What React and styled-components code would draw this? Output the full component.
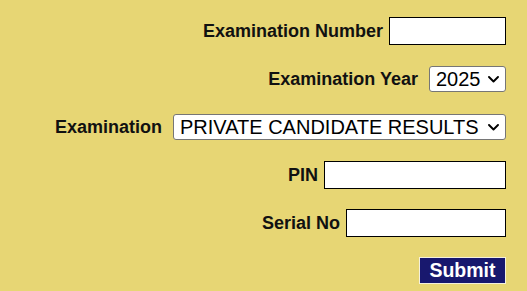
import React, { useState } from 'react';
import styled, { createGlobalStyle } from 'styled-components';

const GlobalStyle = createGlobalStyle`
  html, body {
    margin: 0;
    padding: 0;
    background: #e7d674;
  }
  body {
    font-family: "Liberation Sans", Arial, sans-serif;
    width: 527px;
    height: 291px;
    overflow: hidden;
  }
`;

const Form = styled.form`
  display: flex;
  flex-direction: column;
  align-items: flex-end;
  gap: 20px;
  padding: 17px 21px 0 0;
`;

const Row = styled.div`
  display: flex;
  align-items: center;
  justify-content: flex-end;
  height: 28px;
  gap: ${props => props.wide ? '11px' : '6px'};
`;

const Label = styled.label`
  font-size: 18px;
  font-weight: bold;
  color: #111;
`;

const TextInput = styled.input`
  box-sizing: border-box;
  width: ${props => props.w}px;
  height: 28px;
  border: 1px solid #000;
  background: #fff;
  padding: 2px 4px;
  font-size: 16px;
  font-family: "Liberation Sans", Arial, sans-serif;
  outline: none;
`;

const SelectWrap = styled.div`
  position: relative;
  width: ${props => props.w}px;
  height: 26px;
  margin-top: -1px;
`;

const Select = styled.select`
  appearance: none;
  -webkit-appearance: none;
  box-sizing: border-box;
  width: 100%;
  height: 100%;
  border: 1px solid #767676;
  border-radius: 3px;
  background: #fff;
  color: #000;
  font-size: 20px;
  font-family: "Liberation Sans", Arial, sans-serif;
  padding: 0 20px 0 6px;
  outline: none;
`;

const Chevron = styled.svg`
  position: absolute;
  right: 7px;
  top: 50%;
  margin-top: -3px;
  pointer-events: none;
`;

const SubmitButton = styled.button`
  box-sizing: border-box;
  width: 87px;
  height: 27px;
  margin-top: -1px;
  background: #18186e;
  color: #fff;
  border: 1px solid #f4f0dc;
  font-size: 19.5px;
  font-weight: bold;
  font-family: "Liberation Sans", Arial, sans-serif;
  padding: 0;
  line-height: 1;
  cursor: pointer;
`;

const Dropdown = ({ id, w, value, onChange, options }) => (
  <SelectWrap w={w}>
    <Select id={id} value={value} onChange={onChange}>
      {options.map((opt) => <option key={opt}>{opt}</option>)}
    </Select>
    <Chevron width="11" height="7" viewBox="0 0 11 7">
      <path d="M1 1 L5.5 5.5 L10 1" fill="none" stroke="#000" strokeWidth="1.9" strokeLinecap="round" strokeLinejoin="round" />
    </Chevron>
  </SelectWrap>
);

const App = () => {
  const [examNumber, setExamNumber] = useState('');
  const [year, setYear] = useState('2025');
  const [exam, setExam] = useState('PRIVATE CANDIDATE RESULTS');
  const [pin, setPin] = useState('');
  const [serial, setSerial] = useState('');

  const handleSubmit = (event) => {
    event.preventDefault();
  };

  return (
    <>
      <GlobalStyle />
      <Form onSubmit={handleSubmit}>
        <Row>
          <Label htmlFor="examNumber">Examination Number</Label>
          <TextInput id="examNumber" w={117} value={examNumber}
            onChange={(e) => setExamNumber(e.target.value)} />
        </Row>
        <Row wide>
          <Label htmlFor="year">Examination Year</Label>
          <Dropdown id="year" w={77} value={year} onChange={(e) => setYear(e.target.value)}
            options={['2025', '2024', '2023']} />
        </Row>
        <Row wide>
          <Label htmlFor="exam">Examination</Label>
          <Dropdown id="exam" w={333} value={exam} onChange={(e) => setExam(e.target.value)}
            options={['PRIVATE CANDIDATE RESULTS', 'SCHOOL CANDIDATE RESULTS']} />
        </Row>
        <Row>
          <Label htmlFor="pin">PIN</Label>
          <TextInput id="pin" w={182} value={pin} onChange={(e) => setPin(e.target.value)} />
        </Row>
        <Row>
          <Label htmlFor="serial">Serial No</Label>
          <TextInput id="serial" w={160} value={serial} onChange={(e) => setSerial(e.target.value)} />
        </Row>
        <Row>
          <SubmitButton type="submit">Submit</SubmitButton>
        </Row>
      </Form>
    </>
  );
};

export default App;
